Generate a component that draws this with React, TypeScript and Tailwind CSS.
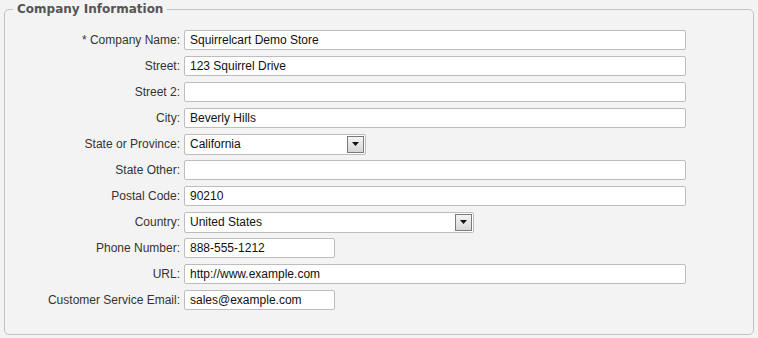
import React from "react";

type Field = {
  label: string;
  value: string;
  kind?: "full" | "short" | "select";
  width?: number;
};

const FIELDS: Field[] = [
  { label: "* Company Name:", value: "Squirrelcart Demo Store" },
  { label: "Street:", value: "123 Squirrel Drive" },
  { label: "Street 2:", value: "" },
  { label: "City:", value: "Beverly Hills" },
  { label: "State or Province:", value: "California", kind: "select", width: 182 },
  { label: "State Other:", value: "" },
  { label: "Postal Code:", value: "90210" },
  { label: "Country:", value: "United States", kind: "select", width: 290 },
  { label: "Phone Number:", value: "888-555-1212", kind: "short" },
  { label: "URL:", value: "http://www.example.com" },
  { label: "Customer Service Email:", value: "sales@example.com", kind: "short" },
];

function TextBox({ value, short }: { value: string; short?: boolean }) {
  return (
    <div
      className={`h-5 ${short ? "w-[151px]" : "w-[502px]"} bg-white border border-[#bdbdbd] rounded-[2px] px-[5px] flex items-center text-[12px] text-[#111] leading-none`}
    >
      {value}
    </div>
  );
}

function SelectBox({ value, width }: { value: string; width: number }) {
  return (
    <div
      className="h-[21px] bg-white border border-[#bdbdbd] rounded-[2px] pl-[5px] pr-[1px] flex items-center justify-between text-[12px] text-[#111] leading-none"
      style={{ width }}
    >
      <span>{value}</span>
      <span className="w-[17px] h-[17px] border border-[#7a7a7a] bg-gradient-to-b from-[#f4f4f4] to-[#d6d6d6] flex items-center justify-center">
        <svg width="7" height="4" viewBox="0 0 7 4">
          <path d="M0 0h7L3.5 4z" fill="#111" />
        </svg>
      </span>
    </div>
  );
}

export default function App() {
  return (
    <div className="w-[758px] h-[338px] bg-[#f3f3f3] px-1 font-['Liberation_Sans',Arial,sans-serif]">
      <fieldset className="border border-[#c2c2c2] rounded-[5px] h-[335px] pt-[9px]">
        <legend className="ml-[8px] px-[4px] text-[12px] leading-[18px] font-bold text-[#555] font-['DejaVu_Sans',sans-serif]">
          Company Information
        </legend>
        <div className="flex flex-col">
          {FIELDS.map((f) => (
            <div key={f.label} className="h-[26px] flex items-center gap-1">
              <label className="w-[175px] text-right text-[12px] text-[#333] shrink-0">
                {f.label}
              </label>
              {f.kind === "select" ? (
                <SelectBox value={f.value} width={f.width ?? 182} />
              ) : (
                <TextBox value={f.value} short={f.kind === "short"} />
              )}
            </div>
          ))}
        </div>
      </fieldset>
    </div>
  );
}
